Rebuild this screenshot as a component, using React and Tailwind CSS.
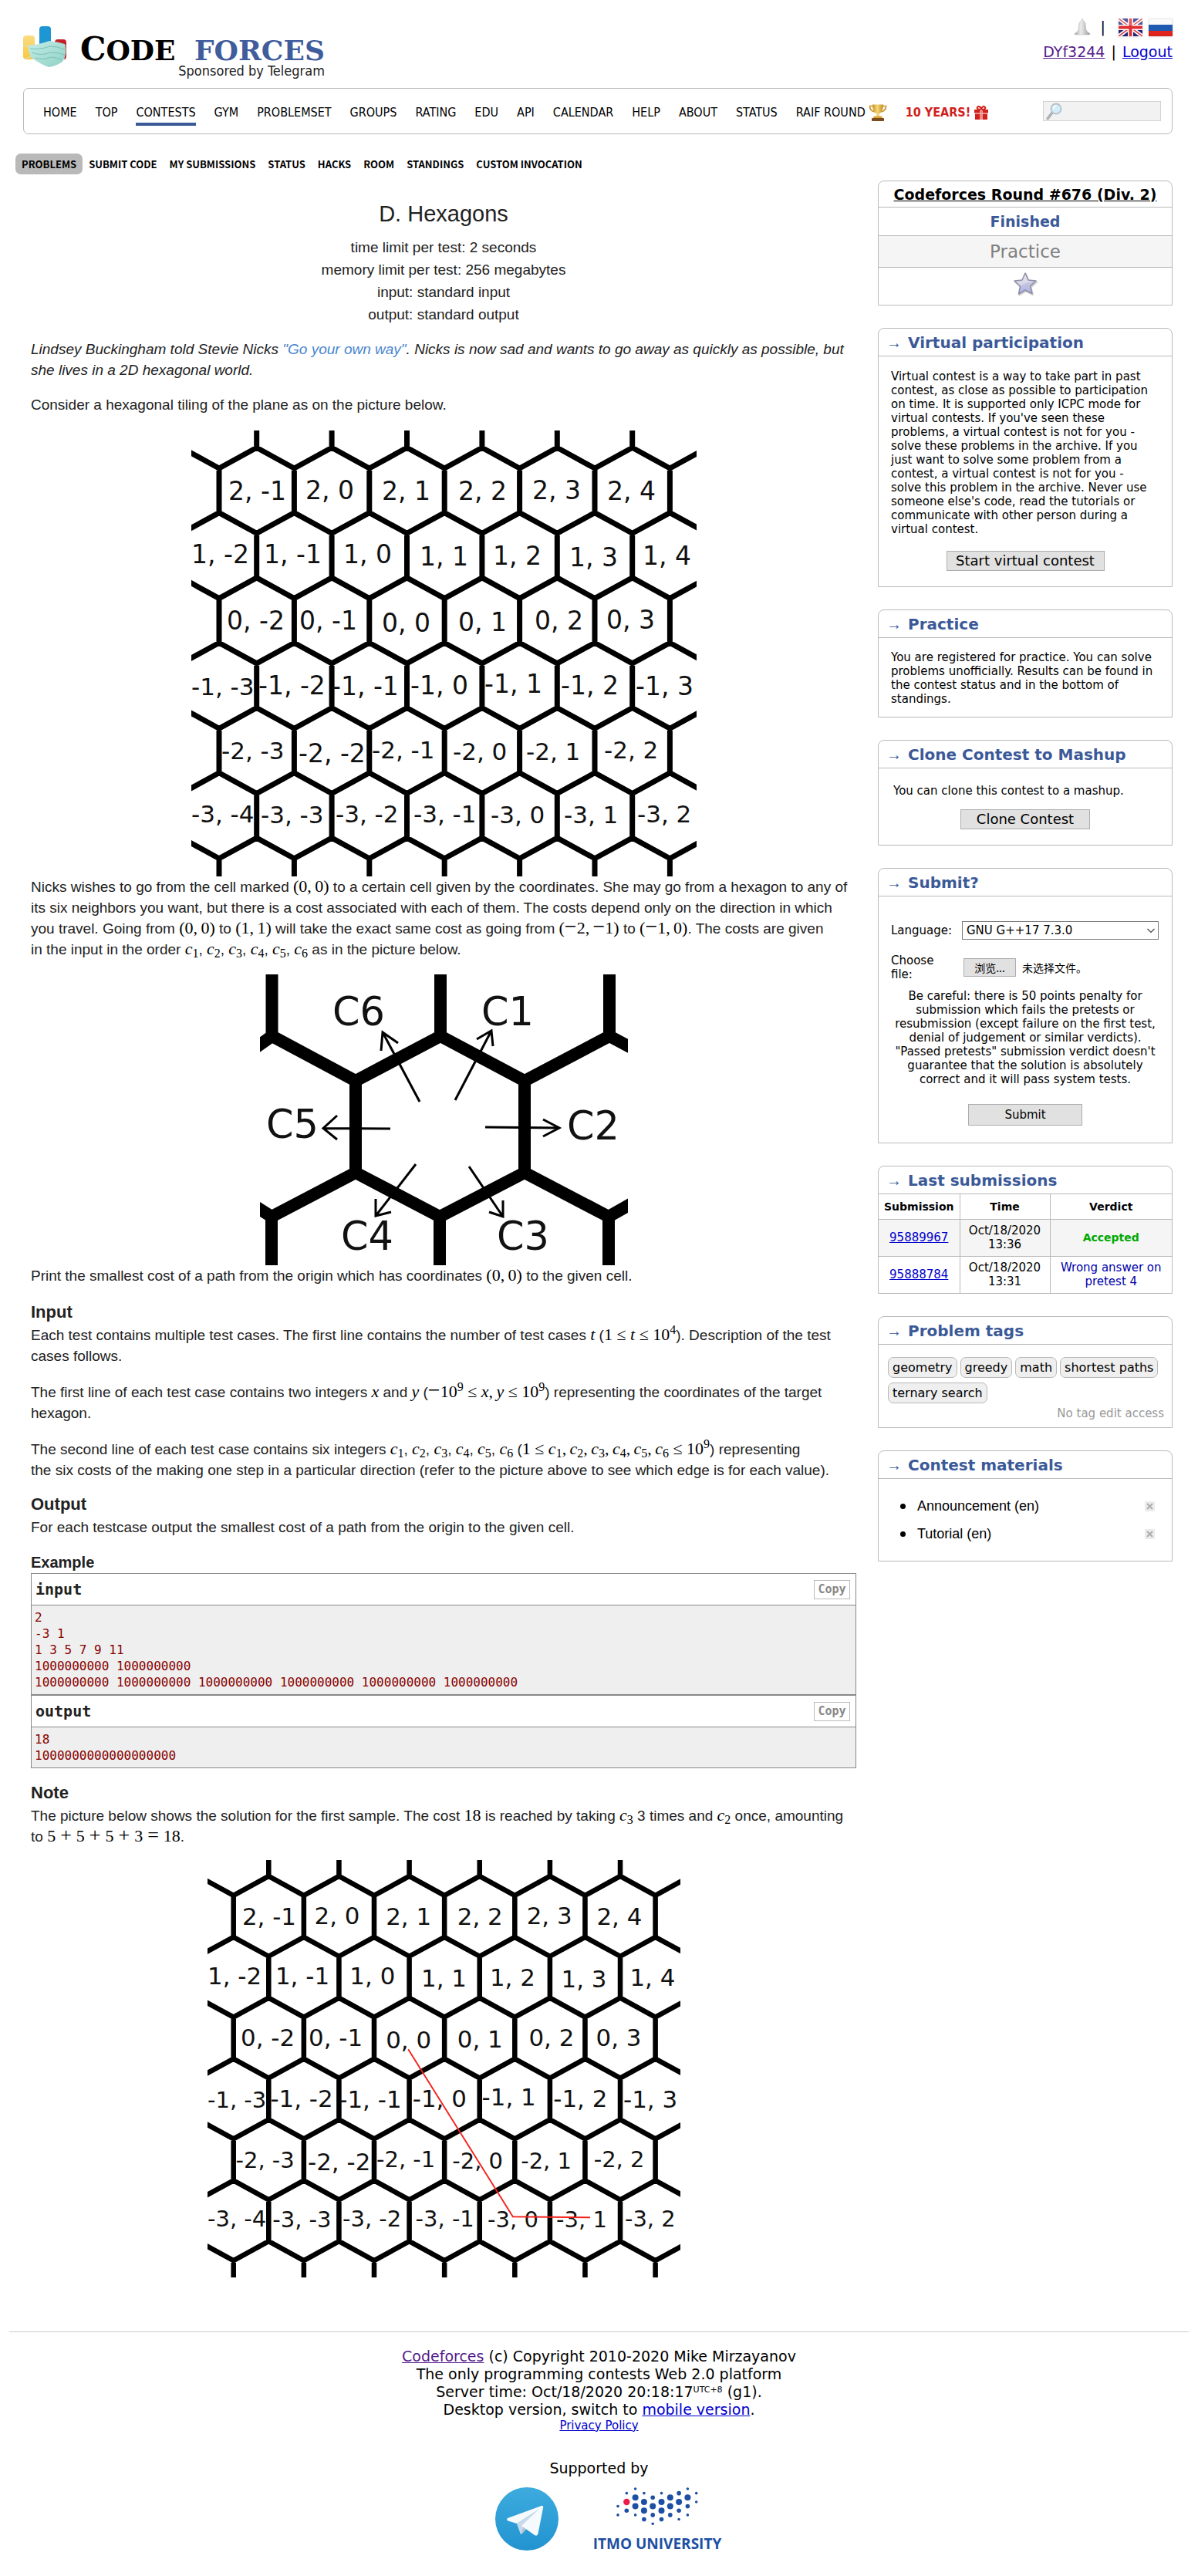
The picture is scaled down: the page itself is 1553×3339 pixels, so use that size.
import React from "react";

const INK = "font-['DejaVu_Sans',sans-serif]";
const CONDENSED = "font-['DejaVu_Sans_Condensed','DejaVu_Sans',sans-serif]";
const TAB_FONT = "font-['Noto_Sans_CJK_SC',sans-serif]";

/* ---------- icons and logos ---------- */

function MaskLogo() {
  return (
    <svg width="58" height="54" viewBox="0 0 58 54" aria-hidden="true">
      <defs>
        <linearGradient id="yb" x1="0" y1="0" x2="0" y2="1">
          <stop offset="0" stopColor="#f9dc83" />
          <stop offset="1" stopColor="#fbc73f" />
        </linearGradient>
        <linearGradient id="mk" x1="0" y1="0" x2="1" y2="1">
          <stop offset="0" stopColor="#c4eee6" />
          <stop offset="1" stopColor="#8fd0c6" />
        </linearGradient>
      </defs>
      <rect x="0" y="12" width="15" height="31" rx="4" fill="url(#yb)" />
      <rect x="21" y="0" width="15" height="40" rx="4" fill="#1e96d3" />
      <rect x="41" y="17" width="15" height="26" rx="4" fill="#c4202a" />
      <path d="M7 25 Q20 24 34 19 Q44 20 54 23 Q58 36 51 46 Q42 52 33 53 Q22 49 11 41 Q6 34 7 25Z" fill="url(#mk)" />
      <path d="M9 29 Q22 31 34 26 Q44 26 54 30 M11 34 Q24 39 35 34 Q46 34 54 37 M15 41 Q26 44 36 40 Q44 41 50 43" fill="none" stroke="#7cc0b5" strokeWidth="1" />
      <path d="M0 24 L8 27 M2 42 L11 39 M57 26 L54 25" stroke="#bfe6df" strokeWidth="1" />
    </svg>
  );
}

function Bell() {
  return (
    <svg width="24" height="24" viewBox="0 0 24 24" aria-hidden="true">
      <defs>
        <linearGradient id="bl" x1="0" y1="0" x2="1" y2="0">
          <stop offset="0" stopColor="#a6a6a6" />
          <stop offset="0.400" stopColor="#ececec" />
          <stop offset="1" stopColor="#9a9a9a" />
        </linearGradient>
      </defs>
      <path d="M12 1 C11 2 11.500 4 10 4.500 C8 5.500 7.500 8 7.500 12 C7.500 16 6 18.500 2.500 20 Q1.500 21.500 3 22 H21 Q23 21.500 21.500 20 C18 18.500 16.500 16 16.500 12 C16.500 8 16 5.500 14 4.500 C12.500 4 13 2 12 1Z" fill="url(#bl)" stroke="#b4b4b4" strokeWidth="0.500" />
    </svg>
  );
}

function FlagUK() {
  return (
    <svg width="31" height="23" viewBox="0 0 31 23" aria-hidden="true" className="shadow-sm">
      <rect width="31" height="23" fill="#22267a" />
      <path d="M0 0L31 23M31 0L0 23" stroke="#fff" strokeWidth="5" />
      <path d="M0 0L31 23M31 0L0 23" stroke="#dc3b42" strokeWidth="1.600" />
      <path d="M15.500 0V23M0 11.500H31" stroke="#fff" strokeWidth="7" />
      <path d="M15.500 0V23M0 11.500H31" stroke="#df2f33" strokeWidth="4" />
      <rect width="31" height="9" fill="#fff" opacity="0.220" />
    </svg>
  );
}

function FlagRU() {
  return (
    <svg width="31" height="23" viewBox="0 0 31 23" aria-hidden="true" className="shadow-sm">
      <rect width="31" height="8" fill="#fbfbfb" />
      <rect y="8" width="31" height="8" fill="#1f5bb0" />
      <rect y="16" width="31" height="7" fill="#e0231d" />
      <rect x="0.500" y="0.500" width="30" height="22" fill="none" stroke="#000" strokeOpacity="0.080" />
    </svg>
  );
}

function Trophy() {
  return (
    <svg width="24" height="22" viewBox="0 0 24 22" aria-hidden="true">
      <defs>
        <linearGradient id="tr" x1="0" y1="0" x2="1" y2="0">
          <stop offset="0" stopColor="#c98f1c" />
          <stop offset="0.450" stopColor="#f6d87a" />
          <stop offset="1" stopColor="#c48a1b" />
        </linearGradient>
      </defs>
      <path d="M6 2.500H1.500Q1.500 8.500 8 10M18 2.500H22.500Q22.500 8.500 16 10" fill="none" stroke="#c9962d" strokeWidth="1.700" />
      <path d="M5 0.500H19Q19 10 13.500 12.500V16H10.500V12.500Q5 10 5 0.500Z" fill="url(#tr)" />
      <path d="M7 15.500H17L18 18H6Z" fill="#d9a63a" />
      <rect x="4" y="18" width="16" height="4" rx="1" fill="#7d4a1c" />
    </svg>
  );
}

function Gift() {
  return (
    <svg width="18" height="18" viewBox="0 0 18 18" aria-hidden="true">
      <path d="M9 5C5 5 3 4 4 2C5.500 0 8 1 9 5C10 1 12.500 0 14 2C15 4 13 5 9 5Z" fill="none" stroke="#d0211c" strokeWidth="2" />
      <path d="M0 5H7.500V9.500H0ZM10.500 5H18V9.500H10.500ZM1 10.500H7.500V18H1ZM10.500 10.500H17V18H10.500Z" fill="#d0211c" />
      <path d="M8 5h2v13h-2z" fill="#e9918e" />
    </svg>
  );
}

function Lens() {
  return (
    <svg width="22" height="22" viewBox="0 0 22 22" aria-hidden="true">
      <path d="M9 13L3 21" stroke="#9a9a9a" strokeWidth="3" strokeLinecap="round" />
      <path d="M9 13L3 21" stroke="#d9d9d9" strokeWidth="1" strokeLinecap="round" />
      <circle cx="14" cy="8" r="6.500" fill="#d2ecfa" stroke="#b9c1c7" strokeWidth="1.800" />
      <path d="M10.500 8Q11 4.500 14.500 4" fill="none" stroke="#fff" strokeWidth="1.600" />
    </svg>
  );
}

function Star() {
  return (
    <svg width="32" height="32" viewBox="0 0 32 32" aria-hidden="true">
      <defs>
        <linearGradient id="st" x1="0" y1="0" x2="0" y2="1">
          <stop offset="0" stopColor="#e4e4ec" />
          <stop offset="0.500" stopColor="#c4c5dc" />
          <stop offset="1" stopColor="#aeb0ee" />
        </linearGradient>
      </defs>
      <path d="M16 2.500L20 11.500L30 12.500L22.500 19.500L25 29L16 24.500L7.500 29.500L9.500 19.500L2 12.500L12 11.500Z" fill="#777" opacity="0.350" transform="translate(1 1)" strokeLinejoin="round" stroke="#777" strokeWidth="2" />
      <path d="M16 2L20 11L30 12L22.500 19L25 28.500L16 24L7.500 29L9.500 19L2 12L12 11Z" fill="url(#st)" stroke="#8e8fa8" strokeWidth="1.500" strokeLinejoin="round" />
      <path d="M4 13L12.500 12L16 4.500L19.500 12L27 13Q16 14 10 19Z" fill="#fff" opacity="0.300" />
    </svg>
  );
}

function Telegram() {
  return (
    <svg width="82" height="82" viewBox="0 0 82 82" role="img" aria-label="Telegram">
      <defs>
        <linearGradient id="tg" x1="0" y1="0" x2="0" y2="1">
          <stop offset="0" stopColor="#3dabde" />
          <stop offset="1" stopColor="#2193cf" />
        </linearGradient>
      </defs>
      <circle cx="41" cy="41" r="41" fill="url(#tg)" />
      <path d="M28 46L33 61Q35 61 37 58L42 52Z" fill="#a9c6d8" />
      <path d="M28 47L56 29L37 50L33 61Z" fill="#c8daea" />
      <path d="M16 40L60 24Q63 23.500 62 27L55.500 60Q54.500 64 51 62L34 50L56 29L28 47L16.500 43.500Q14 42 16 40Z" fill="#f6fafd" />
    </svg>
  );
}

const ITMO_DOTS = [
  [0, 4, 1], [0, 6, 1], [1, 1, 1], [1, 3, 4], [1, 5, 2], [2, 0, 1], [2, 2, 3], [2, 4, 3], [2, 6, 1],
  [3, 1, 1], [3, 3, 3], [3, 5, 3], [3, 7, 2], [4, 2, 2], [4, 4, 3], [4, 6, 2], [4, 8, 1],
  [5, 1, 1], [5, 3, 3], [5, 5, 3], [5, 7, 2], [6, 2, 3], [6, 4, 3], [6, 6, 2],
  [7, 1, 2], [7, 3, 3], [7, 5, 2], [7, 7, 1], [8, 0, 1], [8, 2, 3], [8, 4, 2], [8, 6, 1], [9, 1, 1], [9, 3, 1],
];
const DOT_R = { 1: 1.8, 2: 2.8, 3: 4, 4: 4.2 };

function Itmo() {
  return (
    <div className="flex flex-col items-center">
      <svg width="106" height="50" viewBox="0 0 106 50" aria-hidden="true">
        {ITMO_DOTS.map(([c, r, s]) => (
          <circle key={c + "-" + r} cx={2 + c * 11.3} cy={2 + r * 5.65} r={DOT_R[s]} fill={s === 4 ? "#ee1c46" : "#1d4fa3"} />
        ))}
      </svg>
      <span className="mt-[11px] whitespace-nowrap font-['Open_Sans',sans-serif] text-[19px] leading-[24px] font-bold text-[#1d4fa3]">ITMO UNIVERSITY</span>
    </div>
  );
}

/* ---------- problem drawings ---------- */

const HEX_LABELS = [
  ["2, -1", 48, 90], ["2, 0", 148, 89], ["2, 1", 247, 90], ["2, 2", 346, 90], ["2, 3", 442, 89], ["2, 4", 539, 90],
  ["1, -2", 0, 172], ["1, -1", 94, 172], ["1, 0", 197, 172], ["1, 1", 296, 175], ["1, 2", 391, 174], ["1, 3", 490, 176], ["1, 4", 585, 174],
  ["0, -2", 46, 258], ["0, -1", 140, 258], ["0, 0", 247, 261], ["0, 1", 346, 260], ["0, 2", 445, 258], ["0, 3", 538, 257],
  ["-1, -3", 0, 343, 1], ["-1, -2", 87, 342], ["-1, -1", 182, 343], ["-1, 0", 284, 342], ["-1, 1", 380, 340], ["-1, 2", 479, 342], ["-1, 3", 576, 343],
  ["-2, -3", 39, 426, 1], ["-2, -2", 139, 430], ["-2, -1", 234, 425, 1], ["-2, 0", 339, 427, 1], ["-2, 1", 434, 427, 1], ["-2, 2", 535, 425, 1],
  ["-3, -4", 0, 508, 1], ["-3, -3", 90, 509, 1], ["-3, -2", 187, 508, 1], ["-3, -1", 288, 508, 1], ["-3, 0", 388, 509, 1], ["-3, 1", 483, 509, 1], ["-3, 2", 578, 508, 1],
];

function hexPath() {
  const px = 48.7;
  const parts = [];
  for (let i = -1; i < 7; i++) {
    const peak = 22.3 + 84.3 * i;
    const oddPeak = i % 2 === 0;
    if (i >= 0) {
      const pts = [];
      for (let k = -1; k < 14; k++) {
        const isPeak = (k % 2 !== 0) === oddPeak;
        pts.push((36 + px * k).toFixed(1) + " " + (isPeak ? peak : peak + 26.7).toFixed(1));
      }
      parts.push("M" + pts.join("L"));
    }
    for (let k = -1; k < 14; k++) {
      const isPeak = (k % 2 !== 0) === oddPeak;
      if (!isPeak) parts.push("M" + (36 + px * k).toFixed(1) + " " + (peak + 26.7).toFixed(1) + "V" + (peak + 84.3).toFixed(1));
    }
  }
  return parts.join("");
}

function HexMap({ className, route }) {
  return (
    <svg viewBox="0 0 655 578" className={className} role="img" aria-label="Hexagonal tiling with cell coordinates">
      <path d={hexPath()} fill="none" stroke="#000" strokeWidth="7" strokeLinejoin="round" />
      <g fill="#111" className={INK}>
        {HEX_LABELS.map(([t, x, y, small]) => (
          <text key={t} x={x} y={y} fontSize={small ? 31 : 33}>{t}</text>
        ))}
      </g>
      {route && <path d="M278 262L423 494L530 495" fill="none" stroke="#f3201a" strokeWidth="2" />}
    </svg>
  );
}

function DirectionMap({ className }) {
  return (
    <svg viewBox="0 0 477 377" className={className} role="img" aria-label="Directions C1 to C6 around a cell">
      <path
        d="M15.500 0V80M234 0V80M453 0V80M-10 98L15.500 80L124 138L234 80L343 138L453 80L487 98M124 138V257M343 138V257M-10 298L15 314L124 257L233 314L343 257L452 314L487 294M15 314V377M233 314V377M452 314V377"
        fill="none"
        stroke="#000"
        strokeWidth="16"
      />
      <path
        d="M207 165L159 75M157 99L159 75L179 89M253 163L300 73M281 84L300 73L302 93M169 200L82 199.500M100 183L82 199.500L100 214M292 198L388 199M367 188L388 199L367 210M202 246L150 313M150 291L150 313L170 308M271 249L315 314M315 293L315 314L297 308"
        fill="none"
        stroke="#000"
        strokeWidth="3"
      />
      <g fill="#111" fontSize="51" className={INK}>
        <text x="94" y="66">C6</text>
        <text x="287" y="66">C1</text>
        <text x="8" y="212">C5</text>
        <text x="398" y="214">C2</text>
        <text x="105" y="357">C4</text>
        <text x="307" y="357">C3</text>
      </g>
    </svg>
  );
}

/* ---------- text helpers ---------- */

function M({ children }) {
  return <span className="whitespace-nowrap font-['Liberation_Serif',serif] text-[22px] leading-none text-black">{children}</span>;
}
function Sub({ n }) {
  return (
    <>
      <i>c</i>
      <sub className="text-[16px] leading-none">{n}</sub>
    </>
  );
}
function Pow({ n }) {
  return <sup className="text-[16px] leading-none">{n}</sup>;
}
function Op({ children }) {
  return <span className="px-[6px] text-[26px] leading-[0]">{children}</span>;
}
function Minus() {
  return <span className="text-[28px] leading-[0]">−</span>;
}
function Cs() {
  return [1, 2, 3, 4, 5, 6].map((n) => (
    <React.Fragment key={n}>
      <M><Sub n={n} /></M>
      {n < 6 ? ", " : " "}
    </React.Fragment>
  ));
}

function Sample({ title, text }) {
  return (
    <div className="border border-[#888888] font-['DejaVu_Sans_Mono',monospace]">
      <div className="flex h-[41px] items-center justify-between border-b border-[#888888] pr-[7px] pl-[5px]">
        <span className="text-[20px] font-bold">{title}</span>
        <button type="button" className="h-[25px] w-[47px] border border-[#b9b9b9] text-[15px] leading-none font-bold text-[#888888]">Copy</button>
      </div>
      <pre className="bg-[#efefef] px-[4px] py-[5px] font-['DejaVu_Sans_Mono',monospace] text-[16px] leading-[21px] text-[#880000]">{text}</pre>
    </div>
  );
}

function Box({ title, children }) {
  return (
    <section className="rounded-t-[8px] border border-[#b9b9b9]">
      {title && (
        <h2 className="flex h-[36px] items-center gap-[8px] border-b border-[#b9b9b9] pl-[10px] text-[20px] font-bold text-[#3b5998]">
          <span className="font-['Liberation_Sans',sans-serif] text-[20px] font-normal">→</span>
          {title}
        </h2>
      )}
      {children}
    </section>
  );
}

const NAV = ["HOME", "TOP", "CONTESTS", "GYM", "PROBLEMSET", "GROUPS", "RATING", "EDU", "API", "CALENDAR", "HELP", "ABOUT", "STATUS"];
const TABS = ["PROBLEMS", "SUBMIT CODE", "MY SUBMISSIONS", "STATUS", "HACKS", "ROOM", "STANDINGS", "CUSTOM INVOCATION"];
const TAGS = ["geometry", "greedy", "math", "shortest paths", "ternary search"];
const LINK = "text-[#0000cc] underline";
const VISITED = "text-[#551a8b] underline";

function Sidebar() {
  return (
    <aside className="flex w-[382px] shrink-0 flex-col gap-[29px] pt-[8px] text-[15px] leading-[18px]">
      <section className="rounded-t-[8px] border border-[#b9b9b9] text-center">
        <div className="flex h-[34px] items-center justify-center border-b border-[#b9b9b9] text-[19px] font-bold">
          <a href="#round" className="underline">Codeforces Round #676 (Div. 2)</a>
        </div>
        <div className="flex h-[37px] items-center justify-center border-b border-[#b9b9b9] text-[19px] font-bold text-[#3b5998]">Finished</div>
        <div className="flex h-[41px] items-center justify-center border-b border-[#b9b9b9] bg-[#f5f5f5] text-[23px] text-[#808080]">Practice</div>
        <div className="flex h-[48px] justify-center pt-[5px]"><Star /></div>
      </section>

      <Box title="Virtual participation">
        <div className="flex flex-col items-center px-[16px] pt-[17px] pb-[20px]">
          <p className="w-full">
            Virtual contest is a way to take part in past contest, as close as possible to participation on time. It is supported only ICPC mode for virtual contests. If you've seen these problems, a virtual contest is not for you - solve these problems in the archive. If you just want to solve some problem from a contest, a virtual contest is not for you -<br />solve this problem in the archive. Never use someone else's code, read the tutorials or communicate with other person during a virtual contest.
          </p>
          <button type="button" className="mt-[19px] h-[26px] w-[205px] border border-[#adadad] bg-[#e1e1e1] text-[18px] leading-none">Start virtual contest</button>
        </div>
      </Box>

      <Box title="Practice">
        <p className="px-[16px] pt-[16px] pb-[14px]">You are registered for practice. You can solve problems unofficially. Results can be found in the contest status and in the bottom of standings.</p>
      </Box>

      <Box title="Clone Contest to Mashup">
        <div className="flex flex-col items-center pt-[20px] pb-[20px]">
          <p className="w-full pl-[19px]">You can clone this contest to a mashup.</p>
          <button type="button" className="mt-[15px] h-[26px] w-[168px] border border-[#adadad] bg-[#e1e1e1] text-[18px] leading-none">Clone Contest</button>
        </div>
      </Box>

      <Box title="Submit?">
        <form className="flex flex-col px-[16px] pt-[32px] pb-[22px]">
          <div className="flex h-[24px] items-center">
            <label htmlFor="lang" className="w-[92px]">Language:</label>
            <div className="relative w-[255px]">
              <select id="lang" className="h-[24px] w-full appearance-none border border-[#7a7a7a] bg-white pl-[5px] text-[15px] leading-[20px]">
                <option>GNU G++17 7.3.0</option>
              </select>
              <svg className="pointer-events-none absolute top-[9px] right-[5px]" width="10" height="7" viewBox="0 0 10 7" aria-hidden="true">
                <path d="M0.500 1L5 5.500L9.500 1" fill="none" stroke="#444" strokeWidth="1.200" />
              </svg>
            </div>
          </div>
          <div className="mt-[18px] flex h-[36px] items-center">
            <label htmlFor="src" className="w-[94px]">Choose<br />file:</label>
            <input id="src" type="file" className="sr-only" />
            <button type="button" className="h-[24px] w-[68px] border border-[#adadad] bg-[#e1e1e1] font-['Noto_Sans_CJK_SC',sans-serif] text-[14px] leading-none">浏览...</button>
            <span className="ml-[8px] font-['Noto_Sans_CJK_SC',sans-serif] text-[14px]">未选择文件。</span>
          </div>
          <p className="mt-[10px] text-center">
            Be careful: there is 50 points penalty for submission which fails the pretests or resubmission (except failure on the first test, denial of judgement or similar verdicts). "Passed pretests" submission verdict doesn't guarantee that the solution is absolutely correct and it will pass system tests.
          </p>
          <button type="button" className="mt-[23px] h-[28px] w-[148px] self-center border border-[#adadad] bg-[#e1e1e1] text-[15px] leading-none">Submit</button>
        </form>
      </Box>

      <Box title="Last submissions">
        <table className="w-full table-fixed border-collapse text-center">
          <thead>
            <tr className="h-[32px] border-b border-[#b9b9b9] text-[14px]">
              <th className="w-[105px] border-r border-[#b9b9b9]">Submission</th>
              <th className="w-[117px] border-r border-[#b9b9b9]">Time</th>
              <th>Verdict</th>
            </tr>
          </thead>
          <tbody>
            <tr className="h-[48px] border-b border-[#b9b9b9] bg-[#f5f5f5]">
              <td className="border-r border-[#b9b9b9]"><a href="#95889967" className={LINK}>95889967</a></td>
              <td className="border-r border-[#b9b9b9]">Oct/18/2020<br />13:36</td>
              <td className="text-[14px] font-bold text-[#00a900]">Accepted</td>
            </tr>
            <tr className="h-[48px]">
              <td className="border-r border-[#b9b9b9]"><a href="#95888784" className={LINK}>95888784</a></td>
              <td className="border-r border-[#b9b9b9]">Oct/18/2020<br />13:31</td>
              <td className="text-[#0000aa]">Wrong answer on<br />pretest 4</td>
            </tr>
          </tbody>
        </table>
      </Box>

      <Box title="Problem tags">
        <div className="pt-[16px] pr-[10px] pb-[9px] pl-[12px]">
          <div className="flex flex-wrap gap-x-[4px] gap-y-[6px]">
            {TAGS.map((t) => (
              <span key={t} className="h-[27px] rounded-[7px] border border-[#b9b9b9] bg-[#efefef] px-[5px] text-[16px] leading-[25px]">{t}</span>
            ))}
          </div>
          <div className="mt-[4px] text-right text-[#999999]">No tag edit access</div>
        </div>
      </Box>

      <Box title="Contest materials">
        <ul className="flex flex-col gap-[9px] pt-[22px] pb-[21px] font-['Liberation_Sans',sans-serif] text-[18px] leading-[27px]">
          {["Announcement (en)", "Tutorial (en)"].map((t) => (
            <li key={t} className="flex items-center pr-[22px] pl-[28px]">
              <span className="h-[7px] w-[7px] rounded-full bg-black" />
              <a href={"#" + t.split(" ")[0]} className="ml-[15px] flex-1">{t}</a>
              <button type="button" aria-label="Remove" className="flex h-[13px] w-[13px] items-center justify-center bg-[#ececec]">
                <svg width="9" height="9" viewBox="0 0 9 9" aria-hidden="true"><path d="M1 1L8 8M8 1L1 8" stroke="#adadad" strokeWidth="2" /></svg>
              </button>
            </li>
          ))}
        </ul>
      </Box>
    </aside>
  );
}

function Statement() {
  return (
    <main className="ml-[20px] min-w-0 flex-1 pt-[31px] font-['Liberation_Sans',sans-serif] text-[19px] leading-[27px] text-[#222222]">
      <header className="text-center">
        <h1 className="text-[29px] leading-[40px]">D. Hexagons</h1>
        <div className="mt-[9px] leading-[29px]">
          <div>time limit per test: 2 seconds</div>
          <div>memory limit per test: 256 megabytes</div>
          <div>input: standard input</div>
          <div>output: standard output</div>
        </div>
      </header>

      <p className="mt-[17px] italic">
        Lindsey Buckingham told Stevie Nicks <a href="#song" className="text-[#4a86cf]">"Go your own way"</a>. Nicks is now sad and wants to go away as quickly as possible, but she lives in a 2D hexagonal world.
      </p>
      <p className="mt-[18px]">Consider a hexagonal tiling of the plane as on the picture below.</p>

      <HexMap className="mx-auto mt-[20px] block w-[655px] max-w-full" />

      <p>
        Nicks wishes to go from the cell marked <M>(0,&#8201;0)</M> to a certain cell given by the coordinates. She may go from a hexagon to any of its six neighbors you want, but there is a cost associated with each of them. The costs depend only on the direction in which you travel. Going from <M>(0,&#8201;0)</M> to <M>(1,&#8201;1)</M> will take the exact same cost as going from <M>(<Minus />2,&#8201;<Minus />1)</M> to <M>(<Minus />1,&#8201;0)</M>. The costs are given<br />in the input in the order <Cs />as in the picture below.
      </p>

      <DirectionMap className="mx-auto mt-[19px] block w-[477px] max-w-full" />

      <p>Print the smallest cost of a path from the origin which has coordinates <M>(0,&#8201;0)</M> to the given cell.</p>

      <h2 className="mt-[20px] text-[22px] font-bold">Input</h2>
      <p className="mt-[3px]">
        Each test contains multiple test cases. The first line contains the number of test cases <M><i>t</i></M> (<M>1 ≤ <i>t</i> ≤ 10<Pow n={4} /></M>). Description of the test cases follows.
      </p>
      <p className="mt-[20px]">
        The first line of each test case contains two integers <M><i>x</i></M> and <M><i>y</i></M> (<M><Minus />10<Pow n={9} /> ≤ <i>x</i>,&#8201;<i>y</i> ≤ 10<Pow n={9} /></M>) representing the coordinates of the target hexagon.
      </p>
      <p className="mt-[20px]">
        The second line of each test case contains six integers <Cs />(<M>1 ≤ <Sub n={1} />,&#8201;<Sub n={2} />,&#8201;<Sub n={3} />,&#8201;<Sub n={4} />,&#8201;<Sub n={5} />,&#8201;<Sub n={6} /> ≤ 10<Pow n={9} /></M>) representing<br />the six costs of the making one step in a particular direction (refer to the picture above to see which edge is for each value).
      </p>

      <h2 className="mt-[17px] text-[22px] font-bold">Output</h2>
      <p className="mt-[3px]">For each testcase output the smallest cost of a path from the origin to the given cell.</p>

      <h3 className="mt-[19px] text-[20px] font-bold">Example</h3>
      <Sample title="input" text={"2\n-3 1\n1 3 5 7 9 11\n1000000000 1000000000\n1000000000 1000000000 1000000000 1000000000 1000000000 1000000000"} />
      <Sample title="output" text={"18\n1000000000000000000"} />

      <h2 className="mt-[18px] text-[22px] font-bold">Note</h2>
      <p className="mt-[3px]">
        The picture below shows the solution for the first sample. The cost <M>18</M> is reached by taking <M><Sub n={3} /></M> 3 times and <M><Sub n={2} /></M> once, amounting to <M>5<Op>+</Op>5<Op>+</Op>5<Op>+</Op>3<Op>=</Op>18</M>.
      </p>
      <HexMap route className="mx-auto mt-[17px] block w-[613px] max-w-full" />
    </main>
  );
}

export default function App() {
  return (
    <div className={"bg-white pb-[30px] text-black " + INK}>
      <div className="pr-[33px] pl-[20px]">
        <div className="flex h-[114px] justify-between pl-[10px]">
          <a href="#home" className="flex pt-[34px]" aria-label="Codeforces, sponsored by Telegram">
            <MaskLogo />
            <span className="mt-[11px] ml-[16px] flex flex-col items-end">
              <span className="whitespace-nowrap font-['DejaVu_Serif',serif] text-[36px] leading-[38px] font-bold">
                <span className="text-[42px]">C</span>ODE <span className="ml-[12px] text-[#3f5c9c]">FORCES</span>
              </span>
              <span className={"text-[18px] leading-[16px] text-[#222222] " + CONDENSED}>Sponsored by Telegram</span>
            </span>
          </a>
          <div className="flex flex-col items-end pt-[22px] text-[19px] leading-[25px]">
            <div className="flex h-[26px] items-center">
              <Bell />
              <span className="mx-[12px]">|</span>
              <a href="#en" aria-label="English" className="ml-[5px]"><FlagUK /></a>
              <a href="#ru" aria-label="Russian" className="ml-[8px]"><FlagRU /></a>
            </div>
            <div className="mt-[7px]">
              <a href="#user" className={VISITED}>DYf3244</a> <span className="mx-[2px]">|</span> <a href="#logout" className={LINK}>Logout</a>
            </div>
          </div>
        </div>

        <nav className="ml-[10px] flex h-[60px] items-center rounded-[7px] border border-[#b9b9b9] pr-[14px] pl-[25px]">
          <ul className={"flex flex-1 items-center gap-[24px] pt-[4px] whitespace-nowrap text-[16px] leading-[26px] " + CONDENSED}>
            {NAV.map((n) => (
              <li key={n} className={n === "CONTESTS" ? "border-y-4 border-t-transparent border-b-[#3b5998]" : ""}>
                <a href={"#" + n.toLowerCase()}>{n}</a>
              </li>
            ))}
            <li><a href="#raif" className="flex items-center gap-[4px]">RAIF ROUND <Trophy /></a></li>
            <li><a href="#years" className="flex items-center gap-[5px] font-bold text-[#d0211c]">10 YEARS! <Gift /></a></li>
          </ul>
          <label className="flex h-[26px] w-[153px] shrink-0 items-center border border-[#d3d3d3] bg-[#f2f2f2] pl-[2px]">
            <Lens />
            <input type="text" aria-label="Search" className="min-w-0 flex-1 bg-transparent text-[15px] outline-none" />
          </label>
        </nav>

        <ul className={"mt-[25px] flex whitespace-nowrap text-[13px] leading-[27px] font-bold " + TAB_FONT}>
          {TABS.map((t, i) => (
            <li key={t} className={"px-[8px] " + (i === 0 ? "rounded-[7px] bg-[#b9b9b9]" : "")}>
              <a href={"#" + t.toLowerCase().replace(" ", "-")}>{t}</a>
            </li>
          ))}
        </ul>

        <div className="flex items-start gap-[28px]">
          <Statement />
          <Sidebar />
        </div>
      </div>

      <footer className="mx-[12px] mt-[70px] border-t border-[#cccccc] pt-[20px] text-center text-[19px] leading-[23px]">
        <div><a href="#home" className={VISITED}>Codeforces</a> (c) Copyright 2010-2020 Mike Mirzayanov</div>
        <div>The only programming contests Web 2.0 platform</div>
        <div>Server time: Oct/18/2020 20:18:17<sup className="text-[11px] leading-none">UTC+8</sup> (g1).</div>
        <div>Desktop version, switch to <a href="#mobile" className={LINK}>mobile version</a>.</div>
        <div className="text-[15px] leading-[18px]"><a href="#privacy" className={LINK}>Privacy Policy</a></div>
        <div className="mt-[35px]">Supported by</div>
        <div className="mt-[13px] flex justify-center gap-[45px] pl-[24px]">
          <Telegram />
          <Itmo />
        </div>
      </footer>
    </div>
  );
}
